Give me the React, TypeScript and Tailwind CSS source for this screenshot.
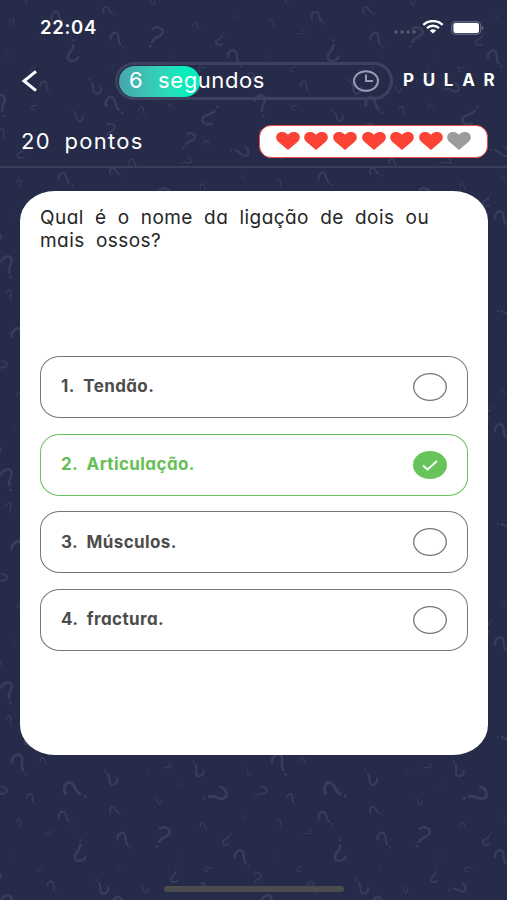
import React from 'react';

// x, y, size, rotation of every doodle in one 260x213 tile
const DOODLES = [
  [21, 764, 1, -42], [44, 761, 0.4, -60], [110, 778, 0.75, 130], [147, 771, 0.2, 0],
  [167, 767, 0.4, 60], [197, 769, 0.75, 140], [248, 771, 0.35, 135], [75, 790, 1.05, -75],
  [261, 793, 0.65, 40], [32, 799, 0.55, -45], [158, 801, 0.4, 120], [181, 785, 0.25, 30],
  [216, 796, 1.05, 62], [66, 818, 0.75, -62], [116, 811, 0.6, -78], [20, 823, 0.4, -30],
  [48, 833, 0.35, 60], [79, 851, 0.95, 170], [125, 840, 0.8, -50], [163, 837, 0.95, 15],
  [204, 826, 0.4, -60], [227, 839, 0.6, 195], [244, 818, 0.3, -45], [14, 855, 0.25, 180],
  [181, 855, 0.25, 180], [40, 868, 0.35, 210], [120, 867, 0.25, 200], [174, 876, 0.6, 178],
  [209, 868, 0.4, 240], [243, 858, 0.85, -50], [53, 887, 0.6, -45], [101, 887, 0.75, 130],
  [144, 889, 0.4, 120], [257, 879, 0.6, 15], [198, 889, 0.75, 70], [9, 905, 0.95, -25],
  [42, 906, 0.4, 220], [84, 916, 0.6, 120], [122, 905, 0.95, -60], [150, 911, 0.45, -45],
  [179, 906, 0.35, -80], [217, 915, 0.95, 205], [117, 931, 0.7, 10], [196, 941, 0.8, 20],
  [215, 943, 0.4, -80], [247, 952, 0.8, 85], [141, 963, 0.5, -60], [193, 962, 0.5, 60],
  [10, 934, 0.5, -30], [29, 952, 0.6, 200],
];

const Doodles = ({ left, top }: { left: number; top: number }) => {
  const tiles: number[][] = [];
  for (let col = -1; col < 3; col++) {
    for (let row = -1; row < 6; row++) {
      tiles.push([col * 260 + left, row * 213 + top]);
    }
  }

  return (
    <svg
      className="absolute inset-0 w-full h-full"
      fill="none"
      stroke="#383d5d"
      strokeWidth="2.7"
      strokeLinecap="round"
      aria-hidden="true"
    >
      {tiles.map(([tx, ty]) => (
        <g key={`${tx} ${ty}`} transform={`translate(${tx} ${ty})`}>
          {DOODLES.map(([x, y, size, angle]) => (
            <g key={`${x} ${y}`} transform={`translate(${x} ${y}) rotate(${angle}) scale(${size})`}>
              <path d="M-5.5 -7.5C-3 -11.5 6 -11.5 5.5 -5.5C5 -1 -1.5 0 -2.5 6" />
              <path d="M-3.5 11h.3" />
            </g>
          ))}
        </g>
      ))}
    </svg>
  );
};

const Heart = ({ color }: { color: string }) => (
  <svg width="24" height="18" viewBox="0 0 24 18" fill={color}>
    <path d="M12 18L2.3 9.8C-.8 7 -.3 2.8 2.5 1C5.5 -1 9.7 0 12 2.7C14.3 0 18.5 -1 21.5 1C24.3 2.8 24.8 7 21.7 9.8Z" />
  </svg>
);

const StatusBar = () => (
  <div className="flex h-[55px] items-center pl-[40px] pr-[22px]">
    <span className="text-[18.5px] font-semibold tracking-[0.7px]">22:04</span>
    <div className="ml-auto flex items-center">
      <svg width="24" height="6" viewBox="0 0 24 6" fill="#555a75" className="mt-2">
        <circle cx="3" cy="3" r="1.8" />
        <circle cx="9" cy="3" r="1.8" />
        <circle cx="15" cy="3" r="1.8" />
        <circle cx="21" cy="3" r="1.8" />
      </svg>
      <svg width="22" height="14" viewBox="0 0 22 14" fill="none" stroke="white" strokeWidth="2.4" className="ml-[5px] mr-px -mt-0.5">
        <path d="M1.3 4.8C6.8 -.2 15.2 -.2 20.7 4.8" />
        <path d="M5 8.1C8.4 5 13.6 5 17 8.1" />
        <path d="M7.8 10.4C9.6 8.9 12.4 8.9 14.2 10.4L11 13.4Z" fill="white" stroke="none" />
      </svg>
      <svg width="34" height="14" viewBox="0 0 34 14" fill="none" className="ml-[6px]">
        <rect x="0.7" y="0.7" width="29" height="12.6" rx="4" stroke="#5d6280" strokeWidth="1.4" />
        <rect x="2.4" y="2.1" width="25.6" height="9.8" rx="2.2" fill="white" />
        <path d="M31.2 5.2C32.6 5.7 32.6 8.3 31.2 8.8Z" fill="#82869b" />
      </svg>
    </div>
  </div>
);

const Header = () => (
  <header className="relative h-[168px] overflow-hidden border-b-2 border-[#393e5b] bg-[#252b49]">
    <Doodles left={-7} top={-800} />
    <div className="relative">
      <StatusBar />
      <div className="flex h-[52px] items-center pl-[21px]">
        <svg width="17" height="22" viewBox="0 0 17 22" fill="none" stroke="white" strokeWidth="3">
          <path d="M15 1.3L3 11L15 20.7" />
        </svg>
        <div className="relative ml-[77px] flex h-[38px] w-[278px] items-center rounded-full border-[3px] border-[#3c4160] px-px">
          <div className="h-[31px] w-[81px] rounded-full bg-gradient-to-r from-[#46a5ae] to-[#05edbd] to-80%" />
          <span className="absolute left-[11px] top-[4px] text-[22px] leading-none tracking-[0.6px] [word-spacing:8px]">6 segundos</span>
          <svg width="26" height="22" viewBox="0 0 26 22" fill="none" stroke="#989bb8" strokeWidth="2" className="ml-auto mr-[10px]">
            <ellipse cx="13" cy="11" rx="12" ry="9.8" />
            <path d="M13 4.5V11H20" />
          </svg>
        </div>
        <span className="ml-[10px] text-[17px] font-bold tracking-[8.7px]">PULAR</span>
      </div>
      <div className="flex h-[59px] items-center justify-between pt-[12px] pl-[21px] pr-[19px] pb-[8px]">
        <span className="pt-[6px] text-[22px] tracking-[1.3px] [word-spacing:6px]">20 pontos</span>
        <div className="mt-[10px] mb-[5px] flex h-[33px] w-[229px] shrink-0 items-center justify-center gap-[4.6px] rounded-[12px] border-[1.5px] border-[#ee4b4b] bg-white">
          {[1, 2, 3, 4, 5, 6].map((n) => (
            <Heart key={n} color="#fa4335" />
          ))}
          <Heart color="#9c9c9c" />
        </div>
      </div>
    </div>
  </header>
);

const Option = ({ label, selected = false }: { label: string; selected?: boolean }) => (
  <button
    className={
      selected
        ? 'flex h-[62px] w-full items-center justify-between rounded-[20px/18px] border border-[#67c45a] pl-[20px] pr-[20px] text-[#64c052]'
        : 'flex h-[62px] w-full items-center justify-between rounded-[20px/18px] border border-[#777777] pl-[20px] pr-[20px] text-[#4c4c4c]'
    }
  >
    <span className="text-[17px] font-bold tracking-[0.4px] [word-spacing:4.5px]">{label}</span>
    {selected ? (
      <svg width="34" height="28" viewBox="0 0 34 28" fill="none">
        <ellipse cx="17" cy="14" rx="17" ry="14" fill="#67c45a" />
        <path d="M10 14.5L14.5 18.5L24 10" stroke="white" strokeWidth="1.8" />
      </svg>
    ) : (
      <svg width="34" height="28" viewBox="0 0 34 28" fill="none">
        <ellipse cx="17" cy="14" rx="16.3" ry="13.3" stroke="#777777" strokeWidth="1.3" />
      </svg>
    )}
  </button>
);

export default function App() {
  return (
    <div className="relative h-[900px] w-[507px] overflow-hidden bg-[#252b49] font-['Inter','Liberation_Sans',sans-serif] text-white [font-feature-settings:'cv11'_1]">
      <Doodles left={0} top={-852} />
      <div className="relative flex h-full flex-col">
        <Header />
        <main className="mr-[19px] ml-[20px] mt-[23px] h-[564px] rounded-[35px/30px] bg-white px-[20px] pt-[15px]">
          <p className="h-[150px] text-[19px] leading-[23px] tracking-[0.45px] text-[#262626] [word-spacing:5.4px]">
            Qual é o nome da ligação de dois ou
            <br />
            mais ossos?
          </p>
          <div className="flex flex-col gap-[15.7px]">
            <Option label="1. Tendão." />
            <Option label="2. Articulação." selected />
            <Option label="3. Músculos." />
            <Option label="4. fractura." />
          </div>
        </main>
        <div className="mt-auto mb-[8px] ml-[164px] h-[6px] w-[180px] rounded-full bg-[#4c4c4d]" />
      </div>
    </div>
  );
}
